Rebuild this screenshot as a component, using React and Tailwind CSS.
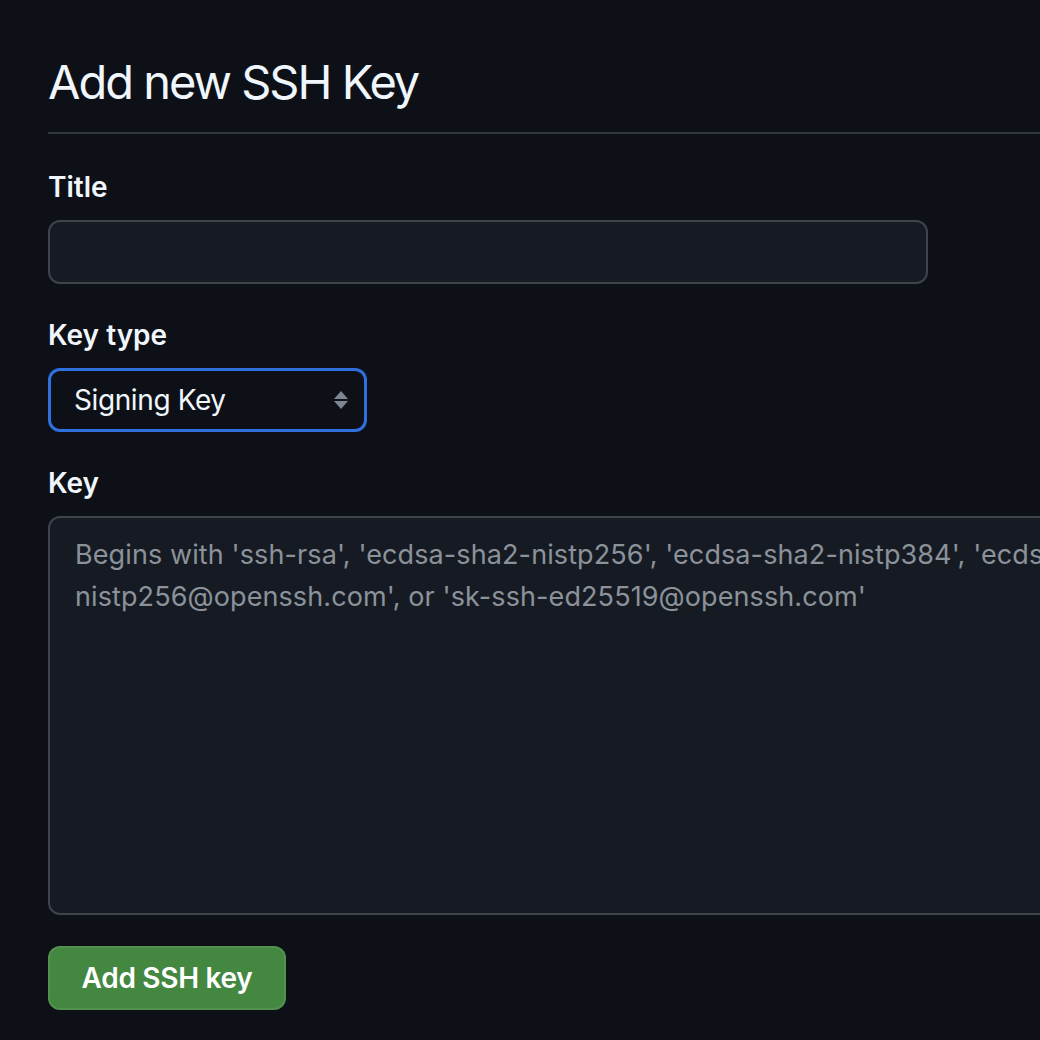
import React from "react";

export default function App() {
  const placeholder =
    "Begins with 'ssh-rsa', 'ecdsa-sha2-nistp256', 'ecdsa-sha2-nistp384', 'ecdsa-sha2-nistp521', 'ssh-ed25519', 'sk-ecdsa-sha2-\nnistp256@openssh.com', or 'sk-ssh-ed25519@openssh.com'";
  return (
    <div
      className="w-[1040px] h-[1040px] overflow-hidden bg-[#0d1117] text-[#f0f6fc]"
      style={{ fontFamily: "Inter, 'Noto Sans', sans-serif" }}
    >
      <div className="w-[2400px] pl-[48px] pt-[52px]">
        <h2 className="text-[47px] leading-[60px] font-normal pb-[20px] border-b-2 border-[#30363d] tracking-[-2px]">
          Add new SSH Key
        </h2>

        <div className="mt-[32px]">
          <label className="block text-[28px] leading-[42px] font-semibold mb-[12px]">
            Title
          </label>
          <input
            type="text"
            className="w-[880px] h-[64px] rounded-[12px] border-2 border-[#3d444d] bg-[#161b23] px-[24px] text-[28px] outline-none"
          />
        </div>

        <div className="mt-[30px]">
          <label className="block text-[28px] leading-[42px] font-semibold mb-[12px]">
            Key type
          </label>
          <div className="relative w-[319px] h-[64px]">
            <select className="appearance-none w-full h-full rounded-[12px] border-[3px] border-[#2f6fde] bg-[#0d1117] pl-[23px] text-[28px] tracking-[-0.4px] text-[#f0f6fc] outline-none">
              <option>Signing Key</option>
            </select>
            <svg
              className="absolute right-[18px] top-[22px] pointer-events-none"
              width="16"
              height="20"
              viewBox="0 0 16 20"
            >
              <path d="M1 9 L8 1 L15 9 Z" fill="#7d8590" />
              <path d="M1 11 L8 19 L15 11 Z" fill="#7d8590" />
            </svg>
          </div>
        </div>

        <div className="mt-[30px]">
          <label className="block text-[28px] leading-[42px] font-semibold mb-[12px]">
            Key
          </label>
          <textarea
            placeholder={placeholder}
            className="block w-[2300px] h-[399px] rounded-[12px] border-2 border-[#3d444d] bg-[#161b23] px-[25px] pt-[16px] text-[27px] tracking-[0.1px] leading-[42px] text-[#f0f6fc] placeholder:text-[#8b929a] outline-none resize-none"
          />
        </div>

        <button className="mt-[31px] w-[238px] h-[64px] rounded-[12px] bg-[#448741] border-2 border-[#5a9a55]/60 text-[28px] font-semibold tracking-[-0.3px] text-white">
          Add SSH key
        </button>
      </div>
    </div>
  );
}
